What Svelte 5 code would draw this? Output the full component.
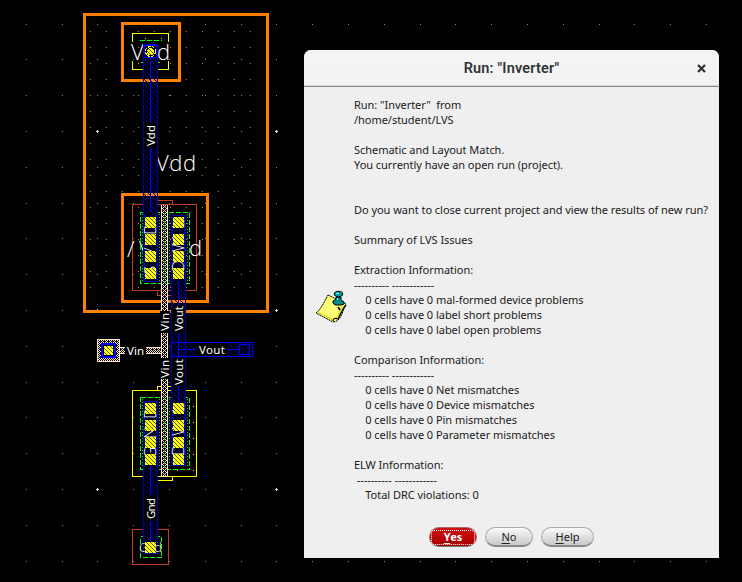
<script>
  const range = (n) => Array.from({ length: n }, (_, i) => i);
  const gx = range(20).map((i) => Math.round(25.85 + 35.8 * i));
  const gy = range(16).map((i) => Math.round(23.6 + 35.8 * i));
  const wx = range(11).map((i) => 90 + 16 * i);
  const wy = range(17).map((i) => 31 + 16 * i);
  const crosses = [97, 276].flatMap((x) => [131, 310, 489].map((y) => [x, y]));
  const contacts = [145, 173].flatMap((x) => [217, 234, 251, 268, 403, 420, 437, 454].map((y) => [x, y]));
  const lines = [
    'Run: "Inverter"  from',
    '/home/student/LVS',
    '',
    'Schematic and Layout Match.',
    'You currently have an open run (project).',
    '',
    '',
    'Do you want to close current project and view the results of new run?',
    '',
    'Summary of LVS Issues',
    '',
    'Extraction Information:',
    '---------- ------------',
    '    0 cells have 0 mal-formed device problems',
    '    0 cells have 0 label short problems',
    '    0 cells have 0 label open problems',
    '',
    'Comparison Information:',
    '---------- ------------',
    '    0 cells have 0 Net mismatches',
    '    0 cells have 0 Device mismatches',
    '    0 cells have 0 Pin mismatches',
    '    0 cells have 0 Parameter mismatches',
    '',
    'ELW Information:',
    ' ---------- ------------',
    '    Total DRC violations: 0'
  ];
  const buttons = [
    { label: 'Yes', kind: 'yes' },
    { label: 'No', kind: 'no' },
    { label: 'Help', kind: 'help' }
  ];
</script>

<div class="screen">
  <svg class="layout" width="742" height="582" viewBox="0 0 742 582" shape-rendering="crispEdges">
    <defs>
      <pattern id="metal" width="5" height="5" patternUnits="userSpaceOnUse">
        <path d="M0 0h1v1h-1zM1 1h1v1h-1zM2 2h1v1h-1zM3 3h1v1h-1zM4 4h1v1h-1z" fill="#0000a0" />
      </pattern>
      <pattern id="poly" x="162" width="5" height="4" patternUnits="userSpaceOnUse">
        <rect width="5" height="4" fill="#000" />
        <path d="M0 0h1v1h-1zM4 0h1v1h-1zM1 1h1v1h-1zM3 1h1v1h-1zM2 2h1v1h-1zM1 3h1v1h-1zM3 3h1v1h-1z" fill="#ffe4c4" />
      </pattern>
      <pattern id="check" x="1" width="4" height="4" patternUnits="userSpaceOnUse">
        <rect width="4" height="4" fill="#000" />
        <path d="M0 0h1v1h-1zM2 0h1v1h-1zM1 1h1v1h-1zM0 2h1v1h-1zM2 2h1v1h-1zM3 3h1v1h-1zM1 3h1v1h-1z" fill="#ffe4c4" />
      </pattern>
      <pattern id="contact" width="4" height="4" patternUnits="userSpaceOnUse">
        <rect width="4" height="4" fill="#ff0" />
        <path d="M0 0h1v1h-1zM1 1h1v1h-1zM2 2h1v1h-1zM3 3h1v1h-1z" fill="#5a5a10" />
      </pattern>
    </defs>

    <g fill="#868696">
      {#each gx as x}{#each gy as y}<rect {x} {y} width="1" height="1" />{/each}{/each}
    </g>
    <g fill="#e87810">
      {#each wx as x}{#each wy as y}<rect {x} {y} width="1" height="1" />{/each}{/each}
    </g>
    <g fill="#dde">
      {#each crosses as [x, y]}<path d="M{x - 1} {y}h3v1h-3zM{x} {y - 1}h1v3h-1z" />{/each}
    </g>

    <g fill="none" stroke="#ff8000" stroke-width="3">
      <rect x="84.5" y="14.5" width="183" height="297" />
      <rect x="122.5" y="23.5" width="57" height="57" />
      <rect x="122.5" y="194.5" width="85" height="107" />
    </g>

    <path d="M132.500 42V33.500H168.500V42M132.500 61V69.500H168.500V61" fill="none" stroke="#ff0" />
    <g fill="none" stroke="#c23b22">
      <rect x="132.500" y="204.500" width="64" height="86" />
      <path d="M157.500 204V200.500H172.500V204M157.500 291V295.500H172.500V291" />
      <rect x="132.500" y="529.500" width="36" height="35" />
    </g>
    <g fill="none" stroke="#ff0">
      <rect x="132.500" y="390.500" width="64" height="86" />
      <path d="M157.500 390V386.500H172.500V390M157.500 477V480.500H172.500V477" />
    </g>
    <g fill="#ff0">
      {#each [406, 422, 438, 454, 470] as y}<rect x="193" {y} width="1" height="1" />{/each}
      <rect x="177" y="470" width="1" height="1" />
      <rect x="145" y="38" width="1" height="1" /><rect x="161" y="38" width="1" height="1" />
    </g>

    <g class="stroke-text">
      <text x="131" y="60" textLength="39">Vdd</text>
      <text x="156" y="171" textLength="40">Vdd</text>
      <text x="127" y="257" textLength="10">/</text>
      <text x="139" y="257">V</text>
      <text x="189" y="256">d</text>
    </g>

    <g fill="none" stroke="#0f0" stroke-dasharray="5 2">
      <path d="M140 40.500H162M141 62.500H162" />
      <rect x="140.500" y="212.500" width="49" height="71" />
      <rect x="140.500" y="397.500" width="49" height="72" />
      <rect x="140.500" y="536.500" width="21" height="21" />
    </g>
    <path d="M142.500 214V282M159.500 214V282M169.500 214V282M187.500 214V282M142.500 399V468M159.500 399V468M169.500 399V468M187.500 399V468" stroke="#0d0" stroke-dasharray="1 2" />

    <g fill="#000">
      <rect x="143" y="44" width="15" height="237" /><rect x="171" y="215" width="15" height="251" />
      <rect x="143" y="401" width="15" height="153" />
    </g>
    <path d="M143 80.500h15M143 194.500h15M171 301.500h15M171 311.500h15" stroke="#ff8000" stroke-width="3" />
    <g fill="url(#metal)" stroke="#0000b0">
      <rect x="143.500" y="44.500" width="14" height="237" />
      <rect x="171.500" y="215.500" width="14" height="250" />
      <rect x="143.500" y="401.500" width="14" height="152" />
      <rect x="171.500" y="342.500" width="81" height="14" stroke="#00f" />
    </g>
    <path d="M150.500 57V212M178.500 281V402M150.500 466V542M178 349.500H240M239.500 344.500h10v10h-10z" fill="none" stroke="#00f" />
    <path d="M144.500 215V281M156.500 215V281M172.500 217V281M184.500 217V281M144.500 402V466M156.500 402V466M172.500 402V466M184.500 402V466" stroke="#00f" stroke-dasharray="2 1" />

    <rect x="161" y="205" width="7" height="272" fill="url(#poly)" />
    <g fill="url(#check)">
      <rect x="120" y="347" width="42" height="7" />
      <rect x="97" y="339" width="23" height="23" />
    </g>
    <path d="M161.500 205V476.500H167.500V205M120 347.500H161M120 353.500H161M97.500 339.500h22v22h-22z" fill="none" stroke="#ffe4c4" />
    <path d="M164.500 213V283M164.500 398V469" stroke="#0d0" stroke-dasharray="2 2" />

    <rect x="102" y="344" width="13" height="13" fill="#000" stroke="#00f" stroke-width="2" />
    <rect x="104" y="346" width="9" height="9" fill="url(#contact)" />

    <g class="device">
      <text transform="translate(156 275) rotate(-90)" textLength="52">S/D</text>
      <text transform="translate(184 272) rotate(-90)" textLength="52">DWL</text>
      <text transform="translate(156 459) rotate(-90)" textLength="52">GND</text>
      <text transform="translate(184 456) rotate(-90)" textLength="52">DWL</text>
    </g>

    <g class="stroke-text"><text class="mid" x="139" y="552" textLength="23">Gnd</text></g>
    <g fill="url(#contact)">
      {#each contacts as [x, y]}<rect {x} {y} width="11" height="11" />{/each}
      <rect x="145" y="542" width="11" height="11" />
    </g>
    <rect x="144.500" y="45.500" width="12" height="12" fill="#000" stroke="#00f" />
    <circle cx="150.500" cy="51.500" r="3.500" fill="url(#contact)" />
    <circle cx="150.500" cy="51.500" r="5" fill="none" stroke="#ff0" stroke-dasharray="3 1" />

    <g fill="#000">
      <rect x="144" y="122" width="13" height="26" />
      <rect x="160" y="311" width="10" height="22" /><rect x="160" y="358" width="10" height="21" />
      <rect x="172" y="305" width="13" height="28" /><rect x="172" y="358" width="13" height="28" />
      <rect x="125" y="345" width="21" height="12" /><rect x="196" y="343" width="31" height="13" />
      <rect x="144" y="495" width="13" height="26" />
    </g>
    <g class="net">
      <text transform="translate(155 146) rotate(-90)" textLength="21">Vdd</text>
      <text transform="translate(169 331) rotate(-90)" textLength="18">Vin</text>
      <text transform="translate(169 378) rotate(-90)" textLength="18">Vin</text>
      <text transform="translate(183 331) rotate(-90)" textLength="25">Vout</text>
      <text transform="translate(183 385) rotate(-90)" textLength="26">Vout</text>
      <text transform="translate(155 519) rotate(-90)" textLength="21">Gnd</text>
      <text x="127" y="355" textLength="17">Vin</text>
      <text x="199" y="354" textLength="26">Vout</text>
    </g>
  </svg>

  <section class="dialog">
    <header>
      <h1>Run: "Inverter"</h1>
      <svg class="close" width="9" height="9" viewBox="0 0 9 9"><path d="M1 1L8 8M8 1L1 8" stroke="#2e3436" stroke-width="2.300" /></svg>
    </header>
    <div class="body">
      <svg class="note" width="34" height="34" viewBox="0 0 34 34">
        <path d="M13 5L31 14C27 22 27 27 22 31L18 32L1 23C7 18 9 12 13 5Z" fill="#ff7" stroke="#000" stroke-dasharray="2 .6" />
        <path d="M18 31C18 28 20 28 23 29C26 24 27 19 31 15" fill="none" stroke="#000" stroke-width="1.300" />
        <path d="M18 30L3 22M21 28C25 24 25 19 28 14" stroke="#d4c900" fill="none" />
        <path d="M23 17L25 20" stroke="#000" stroke-width="1.500" />
        <path d="M21 7H26V10L29 12V14L26 15H20L18 13V11L21 9Z" fill="#088" stroke="#000" />
        <ellipse cx="23.500" cy="4" rx="4.200" ry="2.700" fill="#0a9a9a" stroke="#000" />
        <path d="M21 3.500H24M22.500 8V10" stroke="#7ff" />
      </svg>
      <div class="message">
        {#each lines as line}<div class="line">{line}</div>{/each}
      </div>
    </div>
    <footer>
      {#each buttons as b}
        <button class={b.kind}><span><u>{b.label[0]}</u>{b.label.slice(1)}</span></button>
      {/each}
    </footer>
  </section>
</div>

<style>
  :global(body) { background: #000; overflow: hidden; }
  .screen { position: relative; width: 742px; height: 582px; background: #000; overflow: hidden; }
  .layout { display: block; }
  .stroke-text text { font: 300 22px "Open Sans", sans-serif; fill: #fff; }
  .stroke-text .mid { font-size: 13px; }
  .device text { font: 300 17px "Open Sans", sans-serif; fill: #fff; }
  .net text { font: 11.5px "Noto Sans", sans-serif; fill: #fff; }
  .dialog {
    position: absolute; left: 304px; top: 50px; width: 415px; height: 508px;
    display: flex; flex-direction: column; overflow: hidden;
    background: #efefef; border-radius: 7px 7px 0 0;
    font-family: "Noto Sans", sans-serif; color: #1a1a1a;
  }
  header {
    height: 37px; box-sizing: border-box; flex: none; display: grid;
    grid-template-columns: 36px 1fr 36px; align-items: center; justify-items: center;
    background: linear-gradient(#f5f5f5, #f2f2f2); border-bottom: 1px solid #8b8c82;
    box-shadow: inset 0 -1px #d4d4d0;
  }
  h1 { grid-column: 2; margin: 0; padding-top: 2px; font: 600 14.5px/20px Roboto, sans-serif; letter-spacing: .18px; color: #2e3436; white-space: nowrap; }
  .close { display: block; }
  .body { display: flex; padding-top: 10px; height: 405px; }
  .note { flex: none; margin: 193px 5px 0 11px; }
  .message { font-size: 11px; line-height: 15px; letter-spacing: -0.037px; }
  .line { height: 15px; white-space: pre; }
  footer { display: flex; gap: 8px; padding: 25px 0 0 125px; }
  button {
    height: 20px; padding: 0; border: 1px solid #aaa; border-bottom: 2px solid #888; border-radius: 10px;
    background: linear-gradient(#fafafa, #c9c9c9); font: 11px/16px "Noto Sans", sans-serif; color: #222;
  }
  button span { display: block; }
  u { text-decoration: underline; text-underline-offset: 2px; text-decoration-thickness: 1px; text-decoration-skip-ink: none; }
  .yes { width: 48px; padding: 1px; border: 1px solid #a66; border-bottom-color: #777; background: linear-gradient(#d01010, #a80000); color: #fff; font-weight: 700; }
  .yes span { height: 15px; line-height: 12px; box-sizing: border-box; border: 1px dotted #fff; border-radius: 3px; }
  .no { width: 48px; }
  .help { width: 53px; }
</style>
